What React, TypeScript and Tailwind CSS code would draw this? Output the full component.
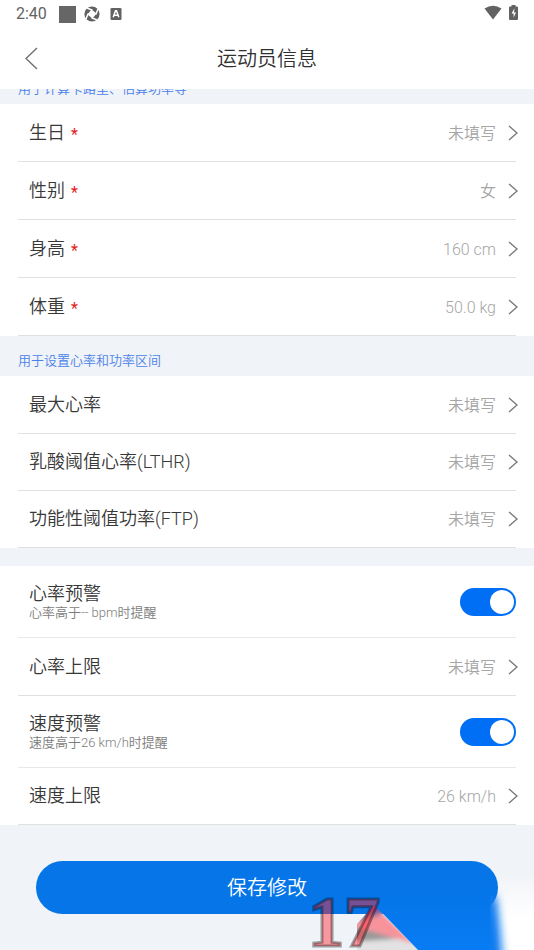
import React, { useId, useState } from 'react';

interface InfoItem {
  label: string;
  value: string;
  required?: boolean;
}

const basicItems: InfoItem[] = [
  { label: '生日', value: '未填写', required: true },
  { label: '性别', value: '女', required: true },
  { label: '身高', value: '160 cm', required: true },
  { label: '体重', value: '50.0 kg', required: true },
];

const zoneItems: InfoItem[] = [
  { label: '最大心率', value: '未填写' },
  { label: '乳酸阈值心率(LTHR)', value: '未填写' },
  { label: '功能性阈值功率(FTP)', value: '未填写' },
];

const StatusBar: React.FC = () => (
  <div className="flex h-7 items-center justify-between px-4 text-[#626262]">
    <div className="flex items-center">
      <span className="w-[43px] text-base font-normal leading-7">2:40</span>
      <span className="h-[17px] w-[17px] bg-[#666]" />
      <svg className="ml-2 h-4 w-4" viewBox="0 0 16 16">
        <circle cx="8" cy="8" r="7.6" fill="currentColor" />
        <path d="M7.5 3.4 12.6 7.5 8.5 12.6 3.4 8.5Z" fill="#fff" />
        <path d="M8.5 4.2 3 2M11.8 8.5 14 3M7.5 11.8 13 14M4.2 7.5 2 13" stroke="#fff" strokeWidth="1.5" />
      </svg>
      <svg className="ml-[10px] h-3 w-3" viewBox="0 0 12 12">
        <rect x="0.5" y="0" width="11" height="12" rx="1.2" fill="currentColor" />
        <path d="m3.2 9.2 2.3-6.4h1l2.3 6.4M4.2 7.2h3.6" fill="none" stroke="#fff" strokeWidth="1.5" />
      </svg>
    </div>
    <div className="flex items-center gap-[7px] pb-0.5">
      <svg className="h-4 w-[18px]" viewBox="0 0 18 16" fill="currentColor">
        <path d="M0.5 3.5Q9-2 17.5 3.5L9 14.5Z" />
      </svg>
      <svg className="h-4 w-[9px]" viewBox="0 0 9 16">
        <path d="M2.5 0h4v1.5H8q1 0 1 1V14q0 1-1 1H1q-1 0-1-1V2.5q0-1 1-1h1.5Z" fill="currentColor" />
        <path d="M5.4 3.2 2.6 8.6h2v4l2.4-5H5.1Z" fill="#fff" />
      </svg>
    </div>
  </div>
);

const Chevron: React.FC = () => (
  <svg className="h-4 w-[10px] shrink-0" viewBox="0 0 10 16" fill="none" stroke="#777" strokeWidth="1.3">
    <path d="m1 1 8 7-8 7" />
  </svg>
);

const SectionTitle: React.FC<{ children: React.ReactNode }> = ({ children }) => (
  <h2 className="h-10 shrink-0 pl-[18px] pt-[15px] text-[13px] leading-5 text-[#4b82ea]">{children}</h2>
);

const InfoRow: React.FC<{ item: InfoItem; height: string }> = ({ item, height }) => (
  <button
    type="button"
    className={`flex w-full items-center justify-between border-b border-[#e0e0e0] pl-[11px] text-left ${height}`}
  >
    <span className="flex items-center text-lg text-[#383838]">
      {item.label}
      {item.required && <span className="pl-1.5 pt-1 text-base font-normal leading-4 text-[#e5201c]">*</span>}
    </span>
    <span className="-mr-0.5 flex items-center gap-3 text-base text-[#a6a6a6]">
      <span className="pt-0.5">{item.value}</span>
      <Chevron />
    </span>
  </button>
);

const SwitchRow: React.FC<{ label: string; hint: string }> = ({ label, hint }) => {
  const id = useId();
  const [checked, setChecked] = useState(true);

  return (
    <div className="flex h-[72px] items-center justify-between border-b border-[#e6e8ea] pl-[11px]">
      <label htmlFor={id} className="pt-0.5">
        <span className="block text-lg leading-5 text-[#383838]">{label}</span>
        <span className="block text-[13px] leading-[18px] text-[#7c7c7c]">{hint}</span>
      </label>
      <input
        id={id}
        type="checkbox"
        role="switch"
        checked={checked}
        onChange={(e) => setChecked(e.target.checked)}
        className="flex h-7 w-14 appearance-none items-center rounded-full bg-[#c8ccd0] px-0.5 before:h-6 before:w-6 before:rounded-full before:bg-white checked:justify-end checked:bg-[#006ff5]"
      />
    </div>
  );
};

// Decorative badge lying over the bottom right corner
const CornerBadge: React.FC = () => (
  <svg
    className="pointer-events-none absolute bottom-0 right-0 h-[90px] w-[234px]"
    viewBox="300 860 234 90"
    aria-hidden="true"
  >
    <defs>
      <linearGradient id="fan" x1="0" y1="0" x2="0" y2="1">
        <stop offset="0" stopColor="#0575e8" />
        <stop offset="1" stopColor="#087cf4" />
      </linearGradient>
      <linearGradient id="haze" x1="0" y1="0" x2="0" y2="1">
        <stop offset="0" stopColor="#fff" stopOpacity="0" />
        <stop offset="0.6" stopColor="#fff" />
      </linearGradient>
      <clipPath id="rays">
        <path d="M374 905 418 950H357V924Z" />
      </clipPath>
      <filter id="soft" x="-50%" y="-50%" width="200%" height="200%">
        <feGaussianBlur stdDeviation="2" />
      </filter>
      <filter id="glow" x="-50%" y="-50%" width="200%" height="200%">
        <feGaussianBlur stdDeviation="4" />
      </filter>
    </defs>
    <rect x="498" y="870" width="36" height="80" fill="url(#haze)" />
    <path d="M478 896H496Q501 930 503 970H478Z" fill="#0a7bf1" filter="url(#glow)" />
    <g clipPath="url(#rays)">
      <g filter="url(#soft)">
        <path d="M345 924 420 930V960H345Z" fill="#e2e2e2" />
        <path d="M350 926 408 938 350 942Z" fill="#999" />
        <path d="M350 925 378 909 415 944Z" fill="#f8939b" />
        <path d="M357 916 384 910 380 915 357 922Z" fill="#8d7896" />
        <path d="M345 887H362L384 911 362 915Z" fill="#7551a3" />
      </g>
    </g>
    <path d="M361 891H490V950H418Z" fill="url(#fan)" />
    <text
      x="308"
      y="946"
      fontFamily="Liberation Serif"
      fontWeight="bold"
      fontSize="72"
      fill="#ff2832"
      fillOpacity="0.45"
      stroke="#000"
      strokeOpacity="0.35"
      strokeWidth="3"
    >
      17
    </text>
  </svg>
);

export default function App() {
  return (
    <div className="relative min-h-screen overflow-hidden bg-[#f0f3f7] font-['Roboto','Noto_Sans_CJK_SC',sans-serif] font-[350]">
      <header className="bg-white">
        <StatusBar />
        <div className="grid h-[61px] grid-cols-[1fr_auto_1fr] items-center">
          <button type="button" aria-label="返回" className="w-14 pl-6">
            <svg className="h-6 w-[14px]" viewBox="0 0 14 24" fill="none" stroke="#707070" strokeWidth="1.4">
              <path d="M13 1 2 11.5 13 22" />
            </svg>
          </button>
          <h1 className="text-xl text-[#303030]">运动员信息</h1>
        </div>
      </header>

      <main>
        {/* first title is partly scrolled under the header */}
        <div className="flex h-[15px] items-end overflow-hidden">
          <SectionTitle>用于计算卡路里、估算功率等</SectionTitle>
        </div>
        <section className="bg-white px-[18px]">
          {basicItems.map((item) => (
            <InfoRow key={item.label} item={item} height="h-[58px]" />
          ))}
        </section>

        <SectionTitle>用于设置心率和功率区间</SectionTitle>
        <section className="bg-white px-[18px] pt-px">
          {zoneItems.map((item) => (
            <InfoRow key={item.label} item={item} height="h-[57px]" />
          ))}
        </section>

        <section className="mt-[18px] bg-white px-[18px]">
          <SwitchRow label="心率预警" hint="心率高于-- bpm时提醒" />
          <InfoRow item={{ label: '心率上限', value: '未填写' }} height="h-[58px]" />
          <SwitchRow label="速度预警" hint="速度高于26 km/h时提醒" />
          <InfoRow item={{ label: '速度上限', value: '26 km/h' }} height="h-[57px]" />
        </section>

        <div className="px-9 py-9">
          <button type="button" className="h-[53px] w-full rounded-full bg-[#0575e8] text-xl text-white">
            保存修改
          </button>
        </div>
      </main>

      <CornerBadge />
    </div>
  );
}
